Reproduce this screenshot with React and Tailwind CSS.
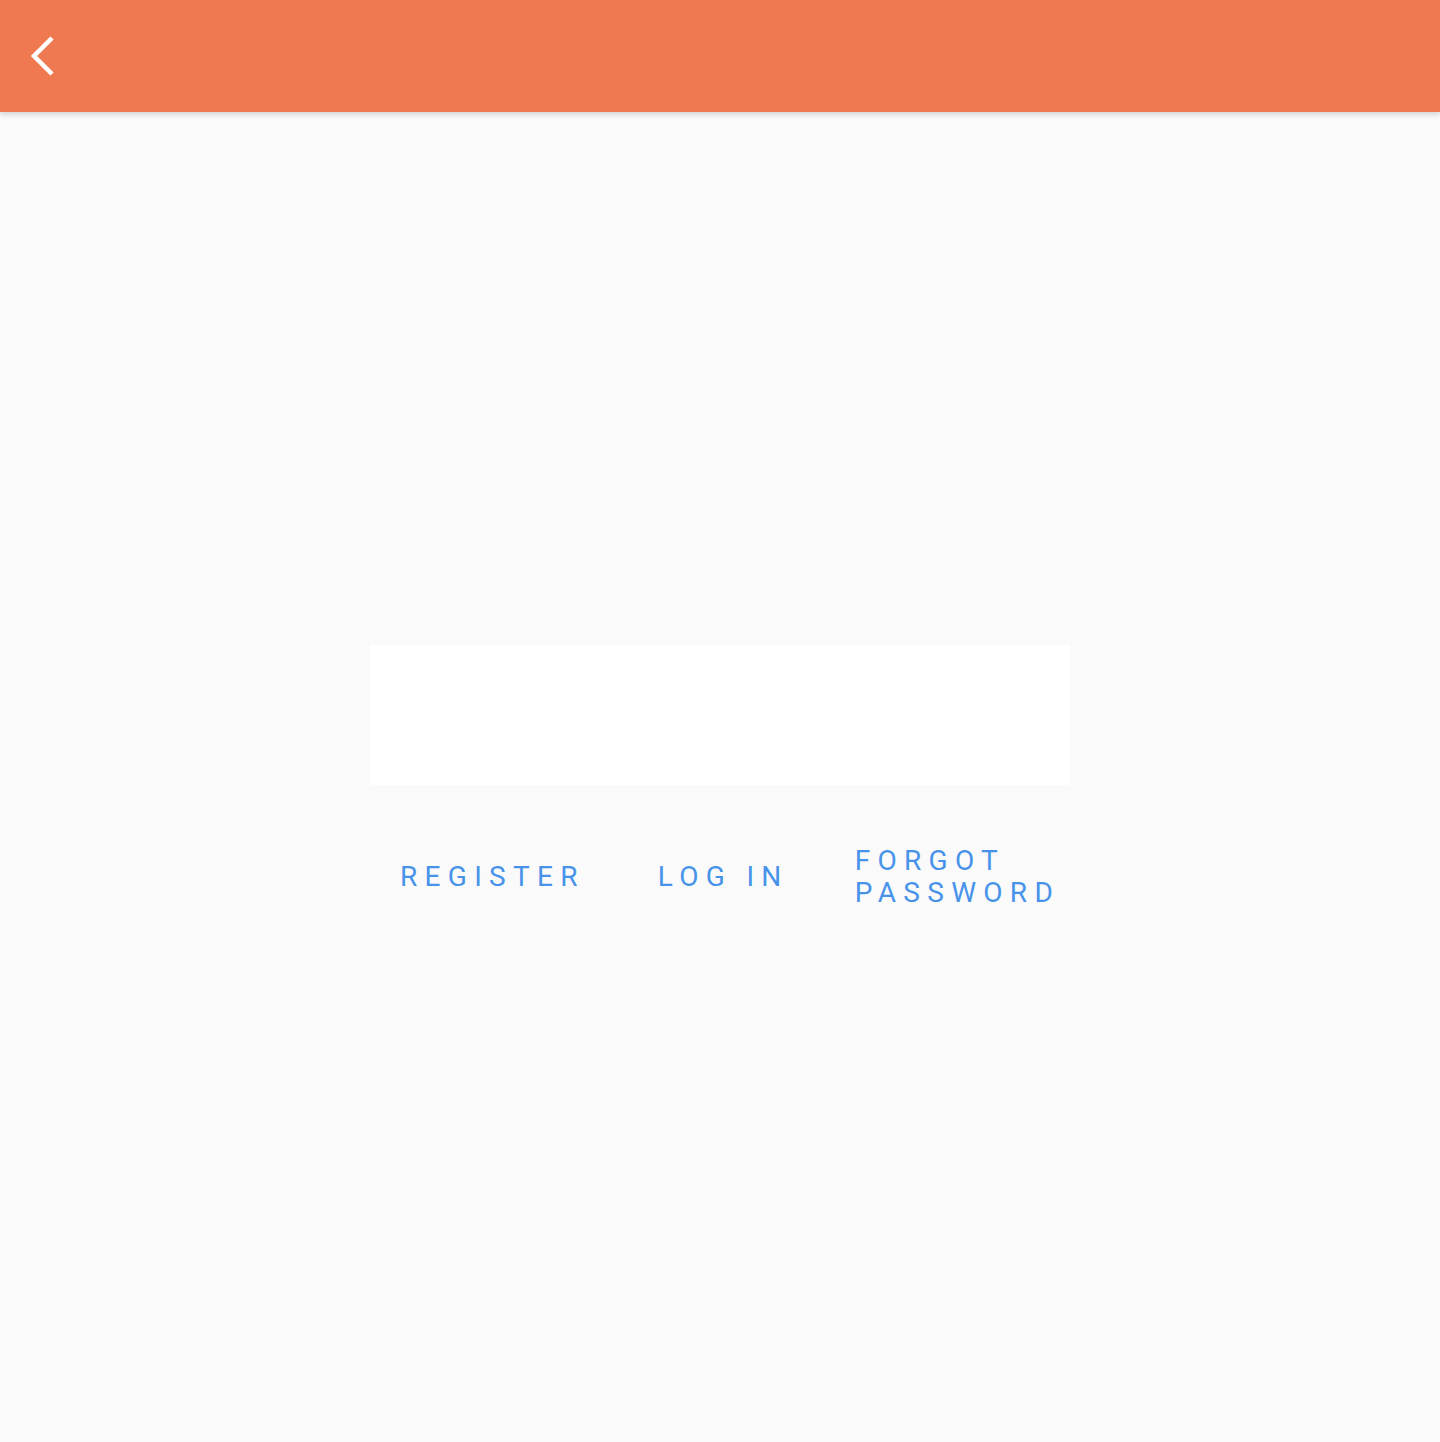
export default function App() {
  return (
    <div className="min-h-screen bg-[#fafafa] font-['Roboto',sans-serif]">
      <header className="relative z-10 h-[112px] bg-[#ef7a52] shadow-[0_2px_6px_rgba(0,0,0,0.18)] flex items-center">
        <button className="w-[88px] h-[112px] flex items-center">
          <svg width="88" height="112" viewBox="0 0 88 112" className="block">
            <polyline
              points="52,38 34,56 52,74"
              fill="none"
              stroke="#ffffff"
              strokeWidth="4.5"
              strokeLinecap="butt"
              strokeLinejoin="miter"
            />
          </svg>
        </button>
      </header>

      <main className="h-[1330px] flex flex-col items-center justify-center">
        <div className="w-[700px] h-[140px] bg-white" />

        <div className="w-[700px] h-[64px] mt-[60px] flex items-center text-[28px] leading-[32px] tracking-[7.3px] text-[#4893ea]">
          <button className="ml-[30px] text-left uppercase">Register</button>
          <button className="ml-[73px] text-left uppercase">Log in</button>
          <button className="ml-[66px] w-[215px] text-left uppercase">Forgot password</button>
        </div>
      </main>
    </div>
  )
}
